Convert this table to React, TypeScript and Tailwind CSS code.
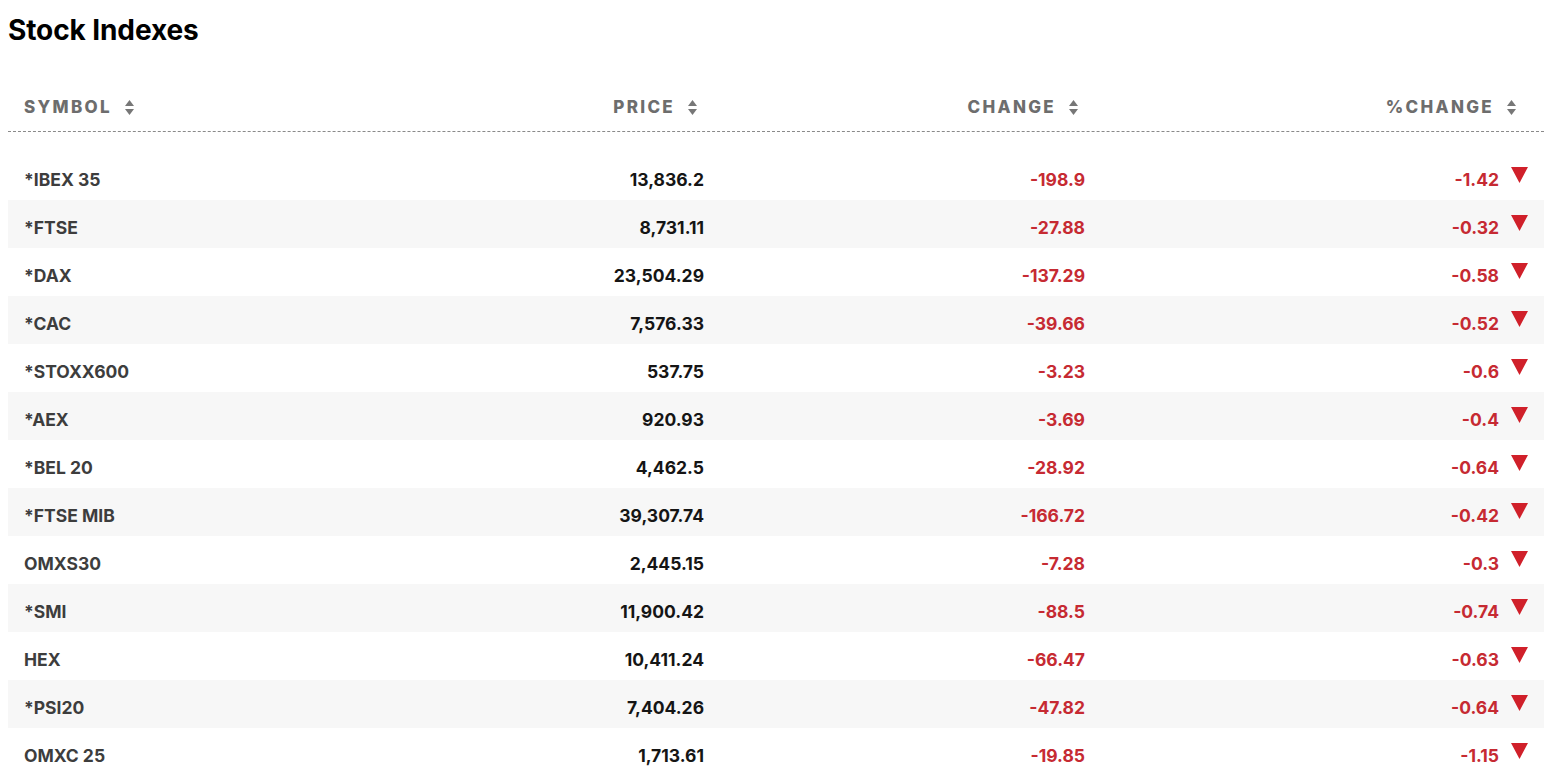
const ROWS = [
  { symbol: '*IBEX 35', price: '13,836.2', change: '-198.9', pct: '-1.42' },
  { symbol: '*FTSE', price: '8,731.11', change: '-27.88', pct: '-0.32' },
  { symbol: '*DAX', price: '23,504.29', change: '-137.29', pct: '-0.58' },
  { symbol: '*CAC', price: '7,576.33', change: '-39.66', pct: '-0.52' },
  { symbol: '*STOXX600', price: '537.75', change: '-3.23', pct: '-0.6' },
  { symbol: '*AEX', price: '920.93', change: '-3.69', pct: '-0.4' },
  { symbol: '*BEL 20', price: '4,462.5', change: '-28.92', pct: '-0.64' },
  { symbol: '*FTSE MIB', price: '39,307.74', change: '-166.72', pct: '-0.42' },
  { symbol: 'OMXS30', price: '2,445.15', change: '-7.28', pct: '-0.3' },
  { symbol: '*SMI', price: '11,900.42', change: '-88.5', pct: '-0.74' },
  { symbol: 'HEX', price: '10,411.24', change: '-66.47', pct: '-0.63' },
  { symbol: '*PSI20', price: '7,404.26', change: '-47.82', pct: '-0.64' },
  { symbol: 'OMXC 25', price: '1,713.61', change: '-19.85', pct: '-1.15' },
]

function SortIcon({ className = '' }: { className?: string }) {
  return (
    <svg width="9" height="15" viewBox="0 0 9 15" className={className} fill="#777">
      <path d="M4.5 0 L9 6 L0 6 Z" />
      <path d="M0 9 L9 9 L4.5 15 Z" />
    </svg>
  )
}

function DownArrow() {
  return (
    <svg width="17" height="16" viewBox="0 0 17 16" className="ml-3 -mt-[11px]" fill="#d0202a">
      <path d="M0 0 L17 0 L8.5 16 Z" />
    </svg>
  )
}

export default function App() {
  return (
    <div
      className="bg-white min-h-screen pl-2 pr-1 text-[#222]"
      style={{ fontFamily: 'Inter, "Liberation Sans", sans-serif' }}
    >
      <h1 className="pt-[14px] h-[81px] text-[28px] leading-[32px] font-bold text-black tracking-[-0.1px]">
        Stock Indexes
      </h1>

      {/* Header */}
      <div className="flex h-[51px] items-center pt-[3px] border-b border-dashed border-[#8a8a8a] text-[17px] font-extrabold uppercase tracking-[2.3px] text-[#6d6d6d]">
        <div className="w-[330px] pl-4 flex items-center">
          SYMBOL
          <SortIcon className="ml-[13px]" />
        </div>
        <div className="w-[382px] pr-4 flex items-center justify-end">
          PRICE
          <SortIcon className="ml-[13px] mr-[7px]" />
        </div>
        <div className="w-[381px] pr-4 flex items-center justify-end">
          CHANGE
          <SortIcon className="ml-[13px] mr-[7px]" />
        </div>
        <div className="flex-1 pr-4 flex items-center justify-end">
          %CHANGE
          <SortIcon className="ml-[13px] mr-[12px]" />
        </div>
      </div>

      {/* Rows */}
      <div className="pt-5 text-[17.5px] font-bold">
        {ROWS.map((r, i) => (
          <div
            key={r.symbol}
            className={`flex h-12 items-center pt-[8px] ${i % 2 === 1 ? 'bg-[#f7f7f7]' : 'bg-white'}`}
          >
            <div className="w-[330px] pl-4 text-[#3d3d3d]">{r.symbol}</div>
            <div className="w-[382px] pr-4 text-right text-[#151515]">{r.price}</div>
            <div className="w-[381px] pr-4 text-right text-[#c62a32]">{r.change}</div>
            <div className="flex-1 pr-4 flex items-center justify-end text-[#c62a32]">
              {r.pct}
              <DownArrow />
            </div>
          </div>
        ))}
      </div>
    </div>
  )
}
